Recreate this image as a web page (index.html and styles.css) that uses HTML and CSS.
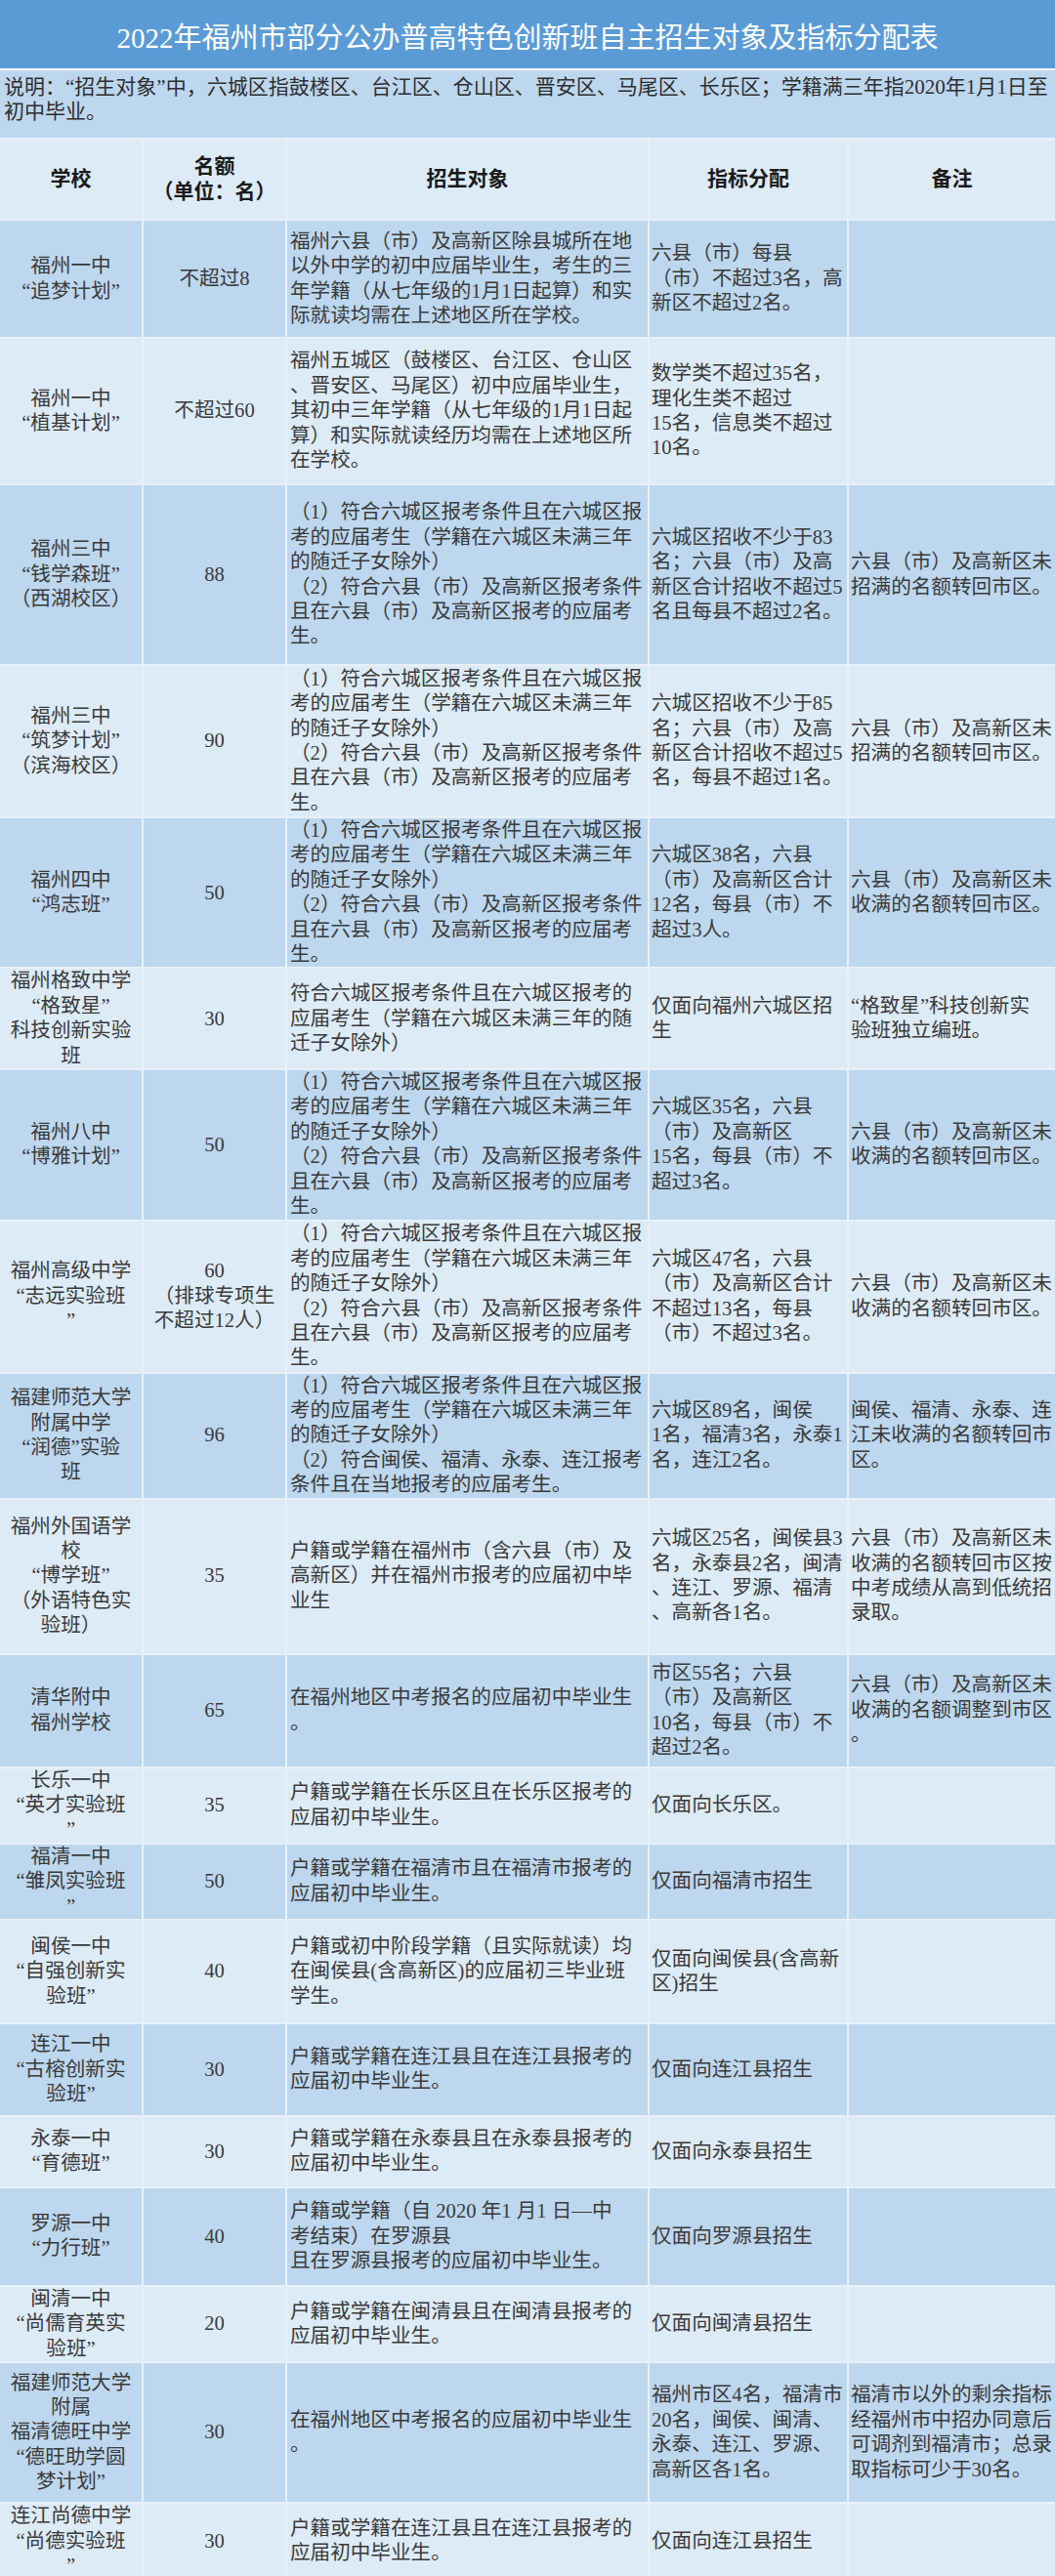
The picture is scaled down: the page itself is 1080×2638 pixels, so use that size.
FILE: index.html
```html
<!DOCTYPE html>
<html lang="zh-CN">
<head>
<meta charset="utf-8">
<title>2022年福州市部分公办普高特色创新班自主招生对象及指标分配表</title>
<link rel="stylesheet" href="styles.css">
</head>
<body>
<div class="sheet">
  <h1 class="title">2022年福州市部分公办普高特色创新班自主招生对象及指标分配表</h1>
  <p class="note">说明：“招生对象”中，六城区指鼓楼区、台江区、仓山区、晋安区、马尾区、长乐区；学籍满三年指2020年1月1日至<br>初中毕业。</p>
  <table class="grid">
    <colgroup>
      <col class="c-school"><col class="c-quota"><col class="c-target"><col class="c-alloc"><col class="c-remark">
    </colgroup>
    <thead>
      <tr>
        <th>学校</th>
        <th>名额<br>（单位：名）</th>
        <th>招生对象</th>
        <th>指标分配</th>
        <th>备注</th>
      </tr>
    </thead>
    <tbody>
      <tr>
        <td class="ctr">福州一中<br>“追梦计划”</td>
        <td class="ctr">不超过8</td>
        <td class="tgt">福州六县（市）及高新区除县城所在地<br>以外中学的初中应届毕业生，考生的三<br>年学籍（从七年级的1月1日起算）和实<br>际就读均需在上述地区所在学校。</td>
        <td>六县（市）每县<br>（市）不超过3名，高<br>新区不超过2名。</td>
        <td></td>
      </tr>
      <tr>
        <td class="ctr">福州一中<br>“植基计划”</td>
        <td class="ctr">不超过60</td>
        <td class="tgt">福州五城区（鼓楼区、台江区、仓山区<br>、晋安区、马尾区）初中应届毕业生，<br>其初中三年学籍（从七年级的1月1日起<br>算）和实际就读经历均需在上述地区所<br>在学校。</td>
        <td>数学类不超过35名，<br>理化生类不超过<br>15名，信息类不超过<br>10名。</td>
        <td></td>
      </tr>
      <tr>
        <td class="ctr">福州三中<br>“钱学森班”<br>（西湖校区）</td>
        <td class="ctr">88</td>
        <td class="tgt">（1）符合六城区报考条件且在六城区报<br>考的应届考生（学籍在六城区未满三年<br>的随迁子女除外）<br>（2）符合六县（市）及高新区报考条件<br>且在六县（市）及高新区报考的应届考<br>生。</td>
        <td>六城区招收不少于83<br>名；六县（市）及高<br>新区合计招收不超过5<br>名且每县不超过2名。</td>
        <td>六县（市）及高新区未<br>招满的名额转回市区。</td>
      </tr>
      <tr>
        <td class="ctr">福州三中<br>“筑梦计划”<br>（滨海校区）</td>
        <td class="ctr">90</td>
        <td class="tgt">（1）符合六城区报考条件且在六城区报<br>考的应届考生（学籍在六城区未满三年<br>的随迁子女除外）<br>（2）符合六县（市）及高新区报考条件<br>且在六县（市）及高新区报考的应届考<br>生。</td>
        <td>六城区招收不少于85<br>名；六县（市）及高<br>新区合计招收不超过5<br>名，每县不超过1名。</td>
        <td>六县（市）及高新区未<br>招满的名额转回市区。</td>
      </tr>
      <tr>
        <td class="ctr">福州四中<br>“鸿志班”</td>
        <td class="ctr">50</td>
        <td class="tgt">（1）符合六城区报考条件且在六城区报<br>考的应届考生（学籍在六城区未满三年<br>的随迁子女除外）<br>（2）符合六县（市）及高新区报考条件<br>且在六县（市）及高新区报考的应届考<br>生。</td>
        <td>六城区38名，六县<br>（市）及高新区合计<br>12名，每县（市）不<br>超过3人。</td>
        <td>六县（市）及高新区未<br>收满的名额转回市区。</td>
      </tr>
      <tr>
        <td class="ctr">福州格致中学<br>“格致星”<br>科技创新实验<br>班</td>
        <td class="ctr">30</td>
        <td class="tgt">符合六城区报考条件且在六城区报考的<br>应届考生（学籍在六城区未满三年的随<br>迁子女除外）</td>
        <td>仅面向福州六城区招<br>生</td>
        <td>“格致星”科技创新实<br>验班独立编班。</td>
      </tr>
      <tr>
        <td class="ctr">福州八中<br>“博雅计划”</td>
        <td class="ctr">50</td>
        <td class="tgt">（1）符合六城区报考条件且在六城区报<br>考的应届考生（学籍在六城区未满三年<br>的随迁子女除外）<br>（2）符合六县（市）及高新区报考条件<br>且在六县（市）及高新区报考的应届考<br>生。</td>
        <td>六城区35名，六县<br>（市）及高新区<br>15名，每县（市）不<br>超过3名。</td>
        <td>六县（市）及高新区未<br>收满的名额转回市区。</td>
      </tr>
      <tr>
        <td class="ctr">福州高级中学<br>“志远实验班<br>”</td>
        <td class="ctr">60<br>（排球专项生<br>不超过12人）</td>
        <td class="tgt">（1）符合六城区报考条件且在六城区报<br>考的应届考生（学籍在六城区未满三年<br>的随迁子女除外）<br>（2）符合六县（市）及高新区报考条件<br>且在六县（市）及高新区报考的应届考<br>生。</td>
        <td>六城区47名，六县<br>（市）及高新区合计<br>不超过13名，每县<br>（市）不超过3名。</td>
        <td>六县（市）及高新区未<br>收满的名额转回市区。</td>
      </tr>
      <tr>
        <td class="ctr">福建师范大学<br>附属中学<br>“润德”实验<br>班</td>
        <td class="ctr">96</td>
        <td class="tgt">（1）符合六城区报考条件且在六城区报<br>考的应届考生（学籍在六城区未满三年<br>的随迁子女除外）<br>（2）符合闽侯、福清、永泰、连江报考<br>条件且在当地报考的应届考生。</td>
        <td>六城区89名，闽侯<br>1名，福清3名，永泰1<br>名，连江2名。</td>
        <td>闽侯、福清、永泰、连<br>江未收满的名额转回市<br>区。</td>
      </tr>
      <tr>
        <td class="ctr">福州外国语学<br>校<br>“博学班”<br>（外语特色实<br>验班）</td>
        <td class="ctr">35</td>
        <td class="tgt">户籍或学籍在福州市（含六县（市）及<br>高新区）并在福州市报考的应届初中毕<br>业生</td>
        <td>六城区25名，闽侯县3<br>名，永泰县2名，闽清<br>、连江、罗源、福清<br>、高新各1名。</td>
        <td>六县（市）及高新区未<br>收满的名额转回市区按<br>中考成绩从高到低统招<br>录取。</td>
      </tr>
      <tr>
        <td class="ctr">清华附中<br>福州学校</td>
        <td class="ctr">65</td>
        <td class="tgt">在福州地区中考报名的应届初中毕业生<br>。</td>
        <td>市区55名；六县<br>（市）及高新区<br>10名，每县（市）不<br>超过2名。</td>
        <td>六县（市）及高新区未<br>收满的名额调整到市区<br>。</td>
      </tr>
      <tr>
        <td class="ctr">长乐一中<br>“英才实验班<br>”</td>
        <td class="ctr">35</td>
        <td class="tgt">户籍或学籍在长乐区且在长乐区报考的<br>应届初中毕业生。</td>
        <td>仅面向长乐区。</td>
        <td></td>
      </tr>
      <tr>
        <td class="ctr">福清一中<br>“雏凤实验班<br>”</td>
        <td class="ctr">50</td>
        <td class="tgt">户籍或学籍在福清市且在福清市报考的<br>应届初中毕业生。</td>
        <td>仅面向福清市招生</td>
        <td></td>
      </tr>
      <tr>
        <td class="ctr">闽侯一中<br>“自强创新实<br>验班”</td>
        <td class="ctr">40</td>
        <td class="tgt">户籍或初中阶段学籍（且实际就读）均<br>在闽侯县(含高新区)的应届初三毕业班<br>学生。</td>
        <td>仅面向闽侯县(含高新<br>区)招生</td>
        <td></td>
      </tr>
      <tr>
        <td class="ctr">连江一中<br>“古榕创新实<br>验班”</td>
        <td class="ctr">30</td>
        <td class="tgt">户籍或学籍在连江县且在连江县报考的<br>应届初中毕业生。</td>
        <td>仅面向连江县招生</td>
        <td></td>
      </tr>
      <tr>
        <td class="ctr">永泰一中<br>“育德班”</td>
        <td class="ctr">30</td>
        <td class="tgt">户籍或学籍在永泰县且在永泰县报考的<br>应届初中毕业生。</td>
        <td>仅面向永泰县招生</td>
        <td></td>
      </tr>
      <tr>
        <td class="ctr">罗源一中<br>“力行班”</td>
        <td class="ctr">40</td>
        <td class="tgt">户籍或学籍（自 2020 年1 月1 日—中<br>考结束）在罗源县<br>且在罗源县报考的应届初中毕业生。</td>
        <td>仅面向罗源县招生</td>
        <td></td>
      </tr>
      <tr>
        <td class="ctr">闽清一中<br>“尚儒育英实<br>验班”</td>
        <td class="ctr">20</td>
        <td class="tgt">户籍或学籍在闽清县且在闽清县报考的<br>应届初中毕业生。</td>
        <td>仅面向闽清县招生</td>
        <td></td>
      </tr>
      <tr>
        <td class="ctr">福建师范大学<br>附属<br>福清德旺中学<br>“德旺助学圆<br>梦计划”</td>
        <td class="ctr">30</td>
        <td class="tgt">在福州地区中考报名的应届初中毕业生<br>。</td>
        <td>福州市区4名，福清市<br>20名，闽侯、闽清、<br>永泰、连江、罗源、<br>高新区各1名。</td>
        <td>福清市以外的剩余指标<br>经福州市中招办同意后<br>可调剂到福清市；总录<br>取指标可少于30名。</td>
      </tr>
      <tr>
        <td class="ctr">连江尚德中学<br>“尚德实验班<br>”</td>
        <td class="ctr">30</td>
        <td class="tgt">户籍或学籍在连江县且在连江县报考的<br>应届初中毕业生。</td>
        <td>仅面向连江县招生</td>
        <td></td>
      </tr>
    </tbody>
  </table>
</div>
</body>
</html>
```

FILE: styles.css
```css
html, body {
  margin: 0;
  padding: 0;
  background: #ddebf7;
}

body {
  font-family: "Liberation Serif", "Noto Sans CJK SC", serif;
  font-size: 21px;
  color: #3a3a3a;
}

.sheet {
  width: 1080px;
}

.title {
  margin: 0;
  box-sizing: border-box;
  height: 72px;
  padding-top: 8px;
  line-height: 62px;
  background: #5b9bd5;
  border-bottom: 2px solid #f4f8fc;
  color: #ffffff;
  font-size: 29px;
  font-weight: normal;
  text-align: center;
  white-space: nowrap;
}

.note {
  margin: 0;
  box-sizing: border-box;
  height: 71px;
  padding: 5px 0 0 4px;
  line-height: 25px;
  background: #bdd7ee;
  border-bottom: 2px solid #e8f0f9;
  color: #2e2e2e;
  white-space: nowrap;
  overflow: hidden;
}

.grid {
  width: 1080px;
  table-layout: fixed;
  border-collapse: separate;
  border-spacing: 0;
  font-size: 20.6px;
}

.c-school { width: 147px; }
.c-quota { width: 147px; }
.c-target { width: 371px; }
.c-alloc { width: 204px; }
.c-remark { width: 211px; }

.grid th,
.grid td {
  box-sizing: border-box;
  padding: 0 0 0 2px;
  border-right: 2px solid #e8f0f9;
  border-bottom: 2px solid #e8f0f9;
  line-height: 25.4px;
  vertical-align: middle;
  text-align: left;
  white-space: nowrap;
  overflow: hidden;
}

.grid td.tgt {
  padding-left: 3px;
}

.grid th:last-child,
.grid td:last-child {
  border-right: none;
}

.grid th {
  background: #ddebf7;
  color: #1a1a1a;
  font-weight: bold;
  font-size: 21px;
  text-align: center;
  padding: 0;
}

.grid thead tr { height: 83px; }

.grid td.ctr {
  text-align: center;
  padding: 0;
}

.grid tbody tr:nth-child(odd) td { background: #bdd7ee; }
.grid tbody tr:nth-child(even) td { background: #ddebf7; }

.grid tbody tr:nth-child(1) { height: 121px; }
.grid tbody tr:nth-child(2) { height: 150px; }
.grid tbody tr:nth-child(3) { height: 185px; }
.grid tbody tr:nth-child(4) { height: 156px; }
.grid tbody tr:nth-child(5) { height: 154px; }
.grid tbody tr:nth-child(6) { height: 103px; }
.grid tbody tr:nth-child(7) { height: 154px; }
.grid tbody tr:nth-child(8) { height: 156px; }
.grid tbody tr:nth-child(9) { height: 127px; }
.grid tbody tr:nth-child(10) { height: 159px; }
.grid tbody tr:nth-child(11) { height: 116px; }
.grid tbody tr:nth-child(12) { height: 78px; }
.grid tbody tr:nth-child(13) { height: 77px; }
.grid tbody tr:nth-child(14) { height: 106px; }
.grid tbody tr:nth-child(15) { height: 95px; }
.grid tbody tr:nth-child(16) { height: 73px; }
.grid tbody tr:nth-child(17) { height: 101px; }
.grid tbody tr:nth-child(18) { height: 78px; }
.grid tbody tr:nth-child(19) { height: 144px; }
.grid tbody tr:nth-child(20) { height: 78px; }
```
